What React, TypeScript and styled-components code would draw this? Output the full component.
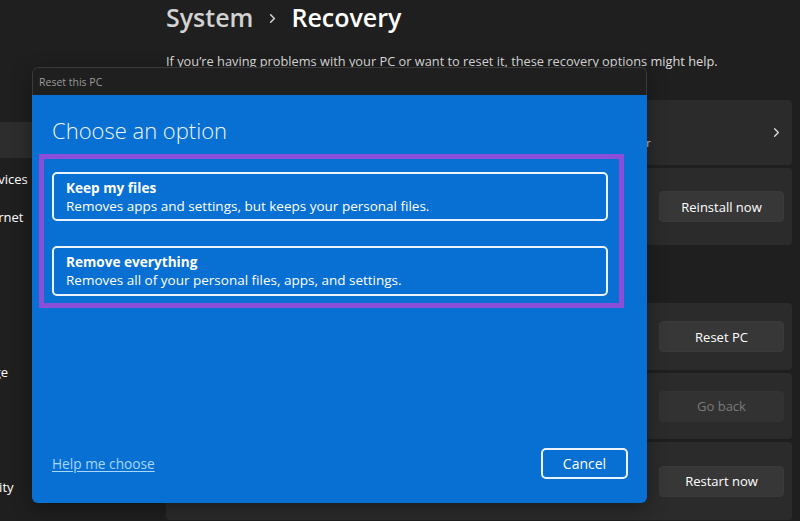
import React from 'react';
import styled, { createGlobalStyle } from 'styled-components';
import { ChevronRight, Wrench, RefreshCw, History, RotateCcw, Power } from 'lucide-react';

const Global = createGlobalStyle`
  html, body { margin: 0; padding: 0; background: #1f1f1f; }
  body {
    width: 800px; height: 521px; overflow: hidden;
    font-family: "Open Sans", "Noto Sans", "Liberation Sans", sans-serif;
  }
  * { box-sizing: border-box; }
`;

const Screen = styled.div`
  position: relative;
  width: 800px;
  height: 521px;
  overflow: hidden;
  display: flex;
  background: #1f1f1f;
  color: #ffffff;
`;

const Sidebar = styled.nav`
  width: 150px;
  flex: none;
  overflow: hidden;
  padding-top: 122px;
`;

const NavList = styled.ul`
  list-style: none;
  margin: 0 0 0 -99px;
  padding: 0;
  width: 250px;
  display: flex;
  flex-direction: column;
  gap: 2.6px;
`;

const NavItem = styled.li<{ $active?: boolean }>`
  height: 36px;
  display: flex;
  align-items: center;
  padding-left: 6px;
  border-radius: 4px;
  background: ${p => (p.$active ? '#2d2d2d' : 'transparent')};
  font-size: 13px;
  color: #ffffff;
  white-space: nowrap;
`;

const Main = styled.main`
  flex: 1;
  padding: 0 8px 0 16px;
  display: flex;
  flex-direction: column;
`;

const Breadcrumb = styled.h1`
  margin: 0;
  height: 34px;
  display: flex;
  align-items: center;
  font-size: 25px;
  font-weight: 600;
  line-height: 34px;
  white-space: nowrap;
`;

const Crumb = styled.span<{ $current?: boolean }>`
  color: ${p => (p.$current ? '#ffffff' : '#d2d2d2')};
`;

const CrumbSep = styled.span`
  display: flex;
  align-items: center;
  margin: 2px 11px 0 12px;
  color: #d2d2d2;
`;

const Intro = styled.p`
  margin: 17px 0 0;
  font-size: 12.8px;
  line-height: 20px;
  color: #dcdcdc;
  white-space: nowrap;
`;

const CardList = styled.div`
  margin-top: 29px;
  display: flex;
  flex-direction: column;
  gap: 3px;
`;

const Card = styled.div<{ $h: number }>`
  height: ${p => p.$h}px;
  flex: none;
  display: flex;
  align-items: center;
  gap: 22px;
  padding: 0 8px 0 18px;
  background: #2b2b2b;
  border-radius: 4px;
`;

const CardIcon = styled.span`
  display: flex;
  color: #e6e6e6;
`;

const CardText = styled.div`
  flex: 1;
  min-width: 0;
  display: flex;
  flex-direction: column;
  gap: 2px;
  white-space: nowrap;
`;

const CardTitle = styled.span`
  font-size: 13px;
  color: #ffffff;
`;

const CardDesc = styled.span`
  font-size: 11.2px;
  color: #cfcfcf;
`;

const CardChevron = styled.span`
  display: flex;
  color: #e0e0e0;
`;

const SectionTitle = styled.h2`
  height: 52px;
  margin: 0;
  display: flex;
  align-items: flex-end;
  padding: 0 0 8px 2px;
  font-size: 13px;
  font-weight: 600;
  color: #ffffff;
`;

const ActionButton = styled.button<{ $disabled?: boolean }>`
  width: 125px;
  height: 31px;
  flex: none;
  border: 1px solid ${p => (p.$disabled ? '#333333' : '#3a3a3a')};
  border-radius: 4px;
  background: ${p => (p.$disabled ? '#323232' : '#373737')};
  color: ${p => (p.$disabled ? '#7a7a7a' : '#ffffff')};
  font-family: inherit;
  font-size: 13px;
`;

const Dialog = styled.section`
  position: absolute;
  left: 32px;
  top: 67px;
  width: 615px;
  height: 436px;
  display: flex;
  flex-direction: column;
  border-radius: 6px;
  overflow: hidden;
  box-shadow: 0 6px 20px rgba(0, 0, 0, 0.35);
`;

const TitleBar = styled.header`
  height: 28px;
  flex: none;
  display: flex;
  align-items: center;
  padding-left: 6px;
  background: #1f1f1f;
  border: 1px solid #3a3a3a;
  border-bottom: none;
  border-radius: 6px 6px 0 0;
  font-size: 10.5px;
  color: #9a9a9a;
`;

const Body = styled.div`
  flex: 1;
  display: flex;
  flex-direction: column;
  padding: 20px 19px 24px 20px;
  background: #086fd3;
`;

const Heading = styled.h2`
  margin: 0;
  font-size: 22px;
  line-height: 30px;
  font-weight: 300;
  color: #eef5ff;
`;

const Highlight = styled.div`
  margin: 9px 0 0 -13px;
  width: 585px;
  padding: 13px 11px 7px 8px;
  border: 5px solid #8b4ed8;
  display: flex;
  flex-direction: column;
  gap: 25px;
`;

const Option = styled.button<{ $h: number }>`
  height: ${p => p.$h}px;
  display: flex;
  flex-direction: column;
  justify-content: center;
  align-items: flex-start;
  padding: 0 12px;
  border: 2px solid #eaf3ff;
  border-radius: 5px;
  background: transparent;
  color: #ffffff;
  font-family: inherit;
  text-align: left;
`;

const OptionTitle = styled.span`
  font-size: 13.6px;
  font-weight: 700;
  line-height: 19px;
`;

const OptionDesc = styled.span`
  font-size: 13.5px;
  line-height: 19px;
`;

const Footer = styled.footer`
  margin-top: auto;
  display: flex;
  align-items: center;
  justify-content: space-between;
`;

const HelpLink = styled.a`
  font-size: 13.7px;
  color: #a9d7ff;
  text-decoration: underline;
  text-underline-offset: 2px;
`;

const CancelButton = styled.button`
  width: 87px;
  height: 31px;
  border: 2px solid #eaf3ff;
  border-radius: 5px;
  background: transparent;
  color: #ffffff;
  font-family: inherit;
  font-size: 14px;
`;

const navItems = [
  'System',
  'Bluetooth & devices',
  'Network & internet',
  'Personalization',
  'Apps',
  'Accounts',
  'Time & language',
  'Gaming',
  'Accessibility',
  'Privacy & security',
];

export default function App() {
  return (
    <>
      <Global />
      <Screen>
        <Sidebar>
          <NavList>
            {navItems.map((n, i) => (
              <NavItem key={n} $active={i === 0}>
                {n}
              </NavItem>
            ))}
          </NavList>
        </Sidebar>
        <Main>
          <Breadcrumb>
            <Crumb>System</Crumb>
            <CrumbSep>
              <ChevronRight size={15} strokeWidth={2.5} />
            </CrumbSep>
            <Crumb $current>Recovery</Crumb>
          </Breadcrumb>
          <Intro>If you’re having problems with your PC or want to reset it, these recovery options might help.</Intro>
          <CardList>
            <Card $h={65}>
              <CardIcon><Wrench size={18} /></CardIcon>
              <CardText>
                <CardTitle>Fix problems without resetting your PC</CardTitle>
                <CardDesc>Resetting can take a while — first, try resolving issues by running a troubleshooter</CardDesc>
              </CardText>
              <CardChevron><ChevronRight size={15} strokeWidth={2} /></CardChevron>
            </Card>
            <Card $h={77}>
              <CardIcon><RefreshCw size={18} /></CardIcon>
              <CardText>
                <CardTitle>Fix problems using Windows Update</CardTitle>
                <CardDesc>Reinstall your current version of Windows</CardDesc>
              </CardText>
              <ActionButton>Reinstall now</ActionButton>
            </Card>
            <SectionTitle>Recovery options</SectionTitle>
            <Card $h={67}>
              <CardIcon><RotateCcw size={18} /></CardIcon>
              <CardText>
                <CardTitle>Reset this PC</CardTitle>
                <CardDesc>Choose to keep or remove your personal files</CardDesc>
              </CardText>
              <ActionButton>Reset PC</ActionButton>
            </Card>
            <Card $h={66}>
              <CardIcon><History size={18} /></CardIcon>
              <CardText>
                <CardTitle>Go back</CardTitle>
                <CardDesc>This option is no longer available on this PC</CardDesc>
              </CardText>
              <ActionButton $disabled>Go back</ActionButton>
            </Card>
            <Card $h={78}>
              <CardIcon><Power size={18} /></CardIcon>
              <CardText>
                <CardTitle>Advanced startup</CardTitle>
                <CardDesc>Restart your device to change startup settings</CardDesc>
              </CardText>
              <ActionButton>Restart now</ActionButton>
            </Card>
          </CardList>
        </Main>

        <Dialog>
          <TitleBar>Reset this PC</TitleBar>
          <Body>
            <Heading>Choose an option</Heading>
            <Highlight>
              <Option $h={49}>
                <OptionTitle>Keep my files</OptionTitle>
                <OptionDesc>Removes apps and settings, but keeps your personal files.</OptionDesc>
              </Option>
              <Option $h={50}>
                <OptionTitle>Remove everything</OptionTitle>
                <OptionDesc>Removes all of your personal files, apps, and settings.</OptionDesc>
              </Option>
            </Highlight>
            <Footer>
              <HelpLink>Help me choose</HelpLink>
              <CancelButton>Cancel</CancelButton>
            </Footer>
          </Body>
        </Dialog>
      </Screen>
    </>
  );
}
